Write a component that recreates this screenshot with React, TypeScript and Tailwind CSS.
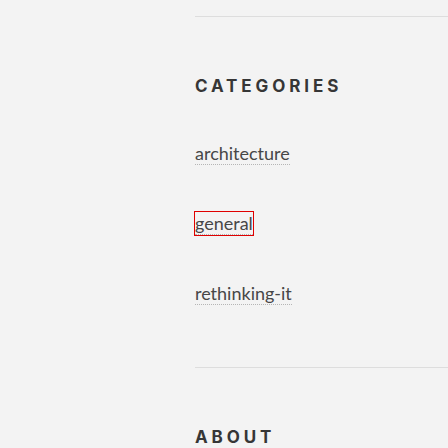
export default function App() {
  const items = ["architecture", "general", "rethinking-it"];
  return (
    <div className="w-[448px] h-[448px] overflow-hidden bg-[#f3f3f3] pl-[195px]" style={{ fontFamily: "Lato, sans-serif" }}>
      <div className="h-[16px]" />
      <div className="border-t border-[#dddddd] pt-[59px]">
        <h2 className="text-[17px] font-bold tracking-[0.23em] leading-[20px] text-[#363636]" style={{ fontFamily: "Inter, sans-serif" }}>CATEGORIES</h2>
        <ul className="mt-[44px] flex flex-col">
          {items.map((it) => (
            <li key={it} className="h-[70px] leading-[26px]">
              <a
                href="#"
                className={
                  "text-[18px] text-[#474747] border-b border-dotted border-[#b5b5b5] " +
                  (it === "general" ? "outline outline-1 outline-[#e00000]" : "")
                }
              >
                {it}
              </a>
            </li>
          ))}
        </ul>
      </div>
      <div className="mt-[17px] border-t border-[#dddddd] pt-[59px]">
        <h2 className="text-[17px] font-bold tracking-[0.23em] leading-[20px] text-[#363636]" style={{ fontFamily: "Inter, sans-serif" }}>ABOUT</h2>
      </div>
    </div>
  );
}
